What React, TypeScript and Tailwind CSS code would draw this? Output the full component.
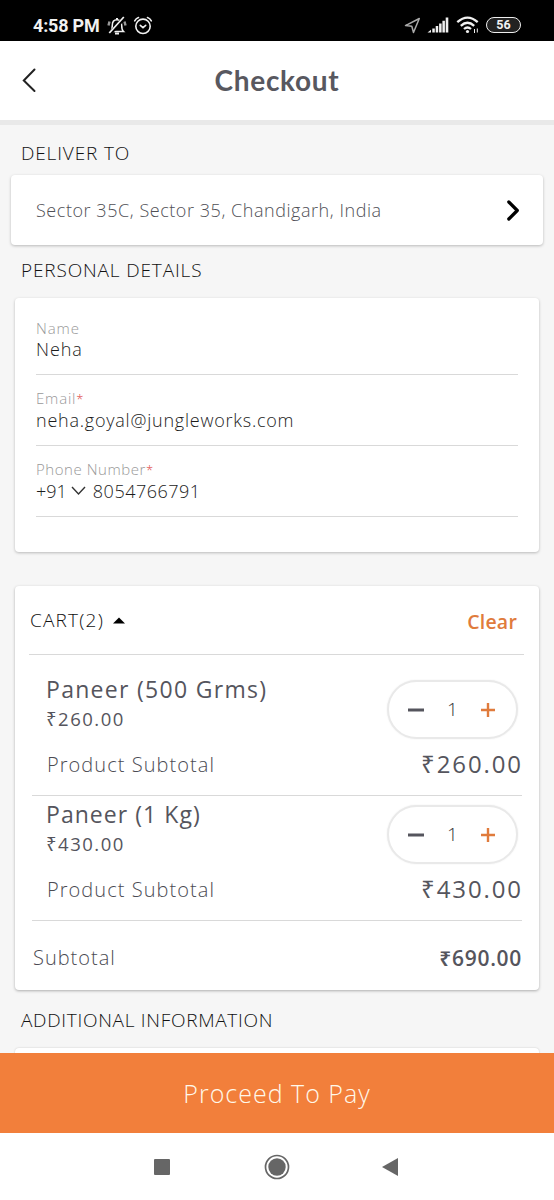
import React, { useState } from 'react';

// ==================Cart data====================
const initialItems = [
    { id: 1, name: 'Paneer (500 Grms)', price: 260, nameClass: 'tracking-[1.3px]', rowClass: 'h-[141px] pt-[18px]' },
    { id: 2, name: 'Paneer (1 Kg)', price: 430, nameClass: 'tracking-[1.05px]', rowClass: 'h-[125px] pt-[2px]' },
];

const money = (value: number) => `₹${value.toFixed(2)}`;

// ==================Status bar====================
const StatusBar: React.FC = () => (
    <div className="flex h-[41px] items-start bg-black px-[33px] pt-[14px] text-[#f1f1f1]">
        <span className="font-['Roboto'] text-[18px] leading-[24px] font-bold tracking-[-0.2px]">4:58 PM</span>
        {/* Muted bell */}
        <svg className="mt-[2px] ml-[7px]" width="20" height="20" viewBox="0 0 20 20" fill="none" stroke="currentColor" strokeWidth="1.5">
            <path d="M3.500 15.500h13c-1.600-1.400-1.800-3-1.800-6.200 0-3.400-1.800-5.500-4.700-5.500S5.300 5.900 5.300 9.300c0 3.200-.2 4.800-1.800 6.200z" />
            <path d="M10 3.800V2M8 17.600h4" strokeWidth="2" />
            <path d="M2.500 5.500L1.500 9.500M17.500 5.500l1 4" stroke="#999" strokeWidth="2.400" />
            <path d="M3 17.500L17.500 1.500" stroke="#000" strokeWidth="4" />
            <path d="M2.300 17L16.800 1" strokeWidth="1.700" />
        </svg>
        {/* Alarm */}
        <svg className="mt-[2px] ml-[6px]" width="20" height="20" viewBox="0 0 20 20" fill="none" stroke="currentColor" strokeWidth="1.600" strokeLinecap="round">
            <circle cx="10" cy="10.300" r="7.200" />
            <path d="M7.300 9.300l2.700 2.300 2.700-2.300" />
            <path d="M1.700 4.800Q3 2.300 5.500 1.500M18.300 4.800Q17 2.300 14.500 1.500" />
        </svg>
        <div className="ml-auto flex">
            <svg className="mt-[3px]" width="17" height="18" viewBox="0 0 17 18" fill="none" stroke="#aaa" strokeWidth="1.500" strokeLinejoin="round">
                <path d="M15.300 1.500L9.500 15.500L7.800 9.300L1.500 8.600z" />
            </svg>
            <svg className="mt-[3px] ml-[6px]" width="22" height="17" viewBox="0 0 22 17" fill="currentColor">
                <path d="M.5 15.500L4 12.800v2.700zM5.300 11.500h2.500v4H5.300zM8.700 9h2.500v6.500H8.700zM12.100 6.500h2.500v9h-2.500zM15.400 3.800h2.500v11.700h-2.500zM18.700.5h2.600v15h-2.600z" />
            </svg>
            <svg className="mt-[2px] ml-[7px]" width="24" height="19" viewBox="0 0 24 19" fill="none" stroke="currentColor" strokeWidth="2.300">
                <path d="M1.300 6.200Q11.500-3 21.700 6.200M4.800 9.800Q11.500 3.800 18.200 9.800M8 13Q11.500 10 15 13" />
                <circle cx="11.500" cy="15.500" r="1.600" fill="currentColor" stroke="none" />
                <path d="M18.500 13v4M21.300 12.500v4" strokeWidth="1" />
            </svg>
            <div className="mt-[3px] ml-[6px] flex h-[16px] w-[35px] items-center justify-center rounded-full border-[1.5px] border-[#eee] bg-[#222] font-['Roboto'] text-[12.5px] font-bold">
                56
            </div>
        </div>
    </div>
);

// ==================Header====================
const Header: React.FC = () => (
    <div className="grid h-[84px] grid-cols-3 items-center border-b-[5px] border-[#e9e9e9] bg-white px-[22px] pb-[2px]">
        <svg width="14" height="26" viewBox="0 0 14 26" fill="none" stroke="#222" strokeWidth="2" strokeLinecap="round">
            <path d="M12.500 2.500L1.800 13.500L12.500 24" />
        </svg>
        <h1 className="text-center font-['Lato'] text-[28px] leading-[36px] font-bold tracking-[0.7px] text-[#58585f]">Checkout</h1>
    </div>
);

// ==================Section title====================
const SectionTitle: React.FC<{ className: string; children: React.ReactNode }> = ({ className, children }) => (
    <h2 className={`pl-[21px] text-[19px] leading-[24px] text-[#111] ${className}`}>{children}</h2>
);

// ==================Form field====================
interface FieldProps {
    label: string;
    required?: boolean;
    labelClass: string;
    children: React.ReactNode;
}

const Field: React.FC<FieldProps> = ({ label, required, labelClass, children }) => (
    <div className="flex h-[71px] flex-col justify-end border-b border-[#d9d9d9] pb-[14px]">
        <div className="text-[15px] leading-[20px] text-[#999]">
            <span className={labelClass}>{label}</span>
            {required && <span className="text-[13px] text-[#e04a4a]">*</span>}
        </div>
        <div className="flex h-[22px] items-center text-[18px] leading-[22px] text-[#1c1c1c]">{children}</div>
    </div>
);

// ==================Quantity stepper====================
interface StepperProps {
    quantity: number;
    onChange: (quantity: number) => void;
}

const Stepper: React.FC<StepperProps> = ({ quantity, onChange }) => (
    <div className="mr-[4px] flex h-[59px] w-[131px] shrink-0 items-center rounded-full border-2 border-[#e9e9e9] bg-white pr-[20px] pl-[18px] shadow-[0_0_2px_#eee]">
        <button className="cursor-pointer" onClick={() => onChange(Math.max(0, quantity - 1))}>
            <svg width="18" height="16" viewBox="0 0 18 16">
                <path d="M1 8h16" stroke="#55555d" strokeWidth="3" />
            </svg>
        </button>
        <span className="flex-1 text-center text-[19px] text-[#33333b]">{quantity}</span>
        <button className="cursor-pointer" onClick={() => onChange(quantity + 1)}>
            <svg width="16" height="16" viewBox="0 0 16 16">
                <path d="M1 8h14M8 1v14" stroke="#e07b3c" strokeWidth="2.400" />
            </svg>
        </button>
    </div>
);

const App: React.FC = () => {
    const [quantities, setQuantities] = useState<Record<number, number>>({ 1: 1, 2: 1 });

    const subtotal = initialItems.reduce((sum, item) => sum + item.price * quantities[item.id], 0);

    return (
        <div className="flex h-[1200px] w-[554px] flex-col overflow-hidden bg-[#f6f6f6] font-['Open_Sans','Noto_Sans',sans-serif] font-light whitespace-nowrap">
            <StatusBar />
            <Header />

            <div className="min-h-0 flex-1 overflow-hidden">
                {/* ==================Address==================== */}
                <SectionTitle className="mt-[16px] tracking-[0.85px]">DELIVER TO</SectionTitle>
                <div className="mx-[11px] mt-[10px] flex h-[70px] items-center justify-between rounded-[4px] bg-white pt-px pr-[24px] pl-[25px] shadow-[0_1px_3px_rgba(0,0,0,0.25)]">
                    <span className="text-[18px] tracking-[0.55px] text-[#505056]">Sector 35C, Sector 35, Chandigarh, India</span>
                    <svg width="12" height="22" viewBox="0 0 12 22" fill="none" stroke="#000" strokeWidth="3.200" strokeLinecap="round" strokeLinejoin="round">
                        <path d="M1.800 2L10.300 10.500L1.800 19" />
                    </svg>
                </div>

                {/* ==================Personal details==================== */}
                <SectionTitle className="mt-[13px] tracking-[0.85px]">PERSONAL DETAILS</SectionTitle>
                <div className="mx-[15px] mt-[16px] h-[254px] rounded-[4px] bg-white px-[21px] pt-[6px] shadow-[0_1px_3px_rgba(0,0,0,0.25)]">
                    <Field label="Name" labelClass="tracking-[0.9px]">
                        <span className="tracking-[0.9px]">Neha</span>
                    </Field>
                    <Field label="Email" labelClass="tracking-[0.8px]" required>
                        <span className="tracking-[0.77px]">neha.goyal@jungleworks.com</span>
                    </Field>
                    <Field label="Phone Number" labelClass="tracking-[0.55px]" required>
                        <span>+91</span>
                        <svg className="mr-[7px] ml-[4px]" width="15" height="10" viewBox="0 0 15 10" fill="none" stroke="#333" strokeWidth="1.400">
                            <path d="M1 1l6.500 7L14 1" />
                        </svg>
                        <span className="tracking-[0.5px]">8054766791</span>
                    </Field>
                </div>

                {/* ==================Cart==================== */}
                <div className="mx-[15px] mt-[34px] h-[404px] rounded-[4px] bg-white pr-[15px] pl-[14px] text-[#4b4b53] shadow-[0_1px_3px_rgba(0,0,0,0.3)]">
                    <div className="flex h-[69px] items-center border-b border-[#d9d9d9]">
                        <span className="pl-px text-[19px] tracking-[1.2px] text-[#111]">CART(2)</span>
                        <svg className="ml-[9px]" width="12" height="7" viewBox="0 0 12 7">
                            <path d="M0 6.500L6 .5L12 6.500z" />
                        </svg>
                        <span className="mt-[4px] mr-[7px] ml-auto text-[19.5px] font-semibold tracking-[0.2px] text-[#e07b3c]">Clear</span>
                    </div>

                    <div className="mr-[2px] ml-[3px]">
                        {initialItems.map((item) => (
                            <div key={item.id} className={`flex flex-col border-b border-[#d9d9d9] ${item.rowClass}`}>
                                <div className="flex items-start justify-between pt-[7px] pl-[14px]">
                                    <div className="h-[60px] font-normal text-[#55555d]">
                                        <div className={`h-[26px] text-[23px] leading-[19px] ${item.nameClass}`}>{item.name}</div>
                                        <div className="text-[18.5px] leading-[26px] tracking-[1.5px]">{money(item.price)}</div>
                                    </div>
                                    <Stepper
                                        quantity={quantities[item.id]}
                                        onChange={(quantity) => setQuantities({ ...quantities, [item.id]: quantity })}
                                    />
                                </div>
                                <div className="mt-[9px] flex items-center justify-between pl-[15px]">
                                    <span className="text-[20px] leading-[32px] tracking-[1.05px]">Product Subtotal</span>
                                    <span className="-mt-[3px] -mr-px text-[24px] leading-[32px] font-normal tracking-[1.9px] text-[#55555d]">{money(item.price * quantities[item.id])}</span>
                                </div>
                            </div>
                        ))}

                        <div className="flex h-[70px] items-center justify-between pt-[4px] pl-px">
                            <span className="text-[20px] tracking-[1px]">Subtotal</span>
                            <span className="pt-[2px] text-[21px] font-semibold tracking-[0.7px] text-[#55555d]">{money(subtotal)}</span>
                        </div>
                    </div>
                </div>

                {/* ==================Additional information==================== */}
                <SectionTitle className="mt-[18px] tracking-[0.7px]">ADDITIONAL INFORMATION</SectionTitle>
                <div className="mx-[15px] mt-[16px] h-[60px] rounded-[4px] bg-white shadow-[0_0_2px_rgba(0,0,0,0.2)]"></div>
            </div>

            {/* ==================Pay button==================== */}
            <button className="h-[80px] cursor-pointer bg-[#f27f3b] pt-px text-[25px] font-light tracking-[1px] text-[#fff8ea]">Proceed To Pay</button>

            {/* ==================Android navigation==================== */}
            <div className="flex h-[67px] items-center bg-white pl-[154px]">
                <svg width="16" height="16" viewBox="0 0 16 16">
                    <rect width="16" height="16" rx="1" fill="#666" />
                </svg>
                <svg className="ml-[94px]" width="26" height="26" viewBox="0 0 26 26">
                    <circle cx="13" cy="13" r="11.500" fill="none" stroke="#666" strokeWidth="1.700" />
                    <circle cx="13" cy="13" r="8.700" fill="#666" />
                </svg>
                <svg className="ml-[92px]" width="16" height="18" viewBox="0 0 16 18">
                    <path d="M0 9L16 0V18z" fill="#666" />
                </svg>
            </div>
        </div>
    );
};

export default App;
